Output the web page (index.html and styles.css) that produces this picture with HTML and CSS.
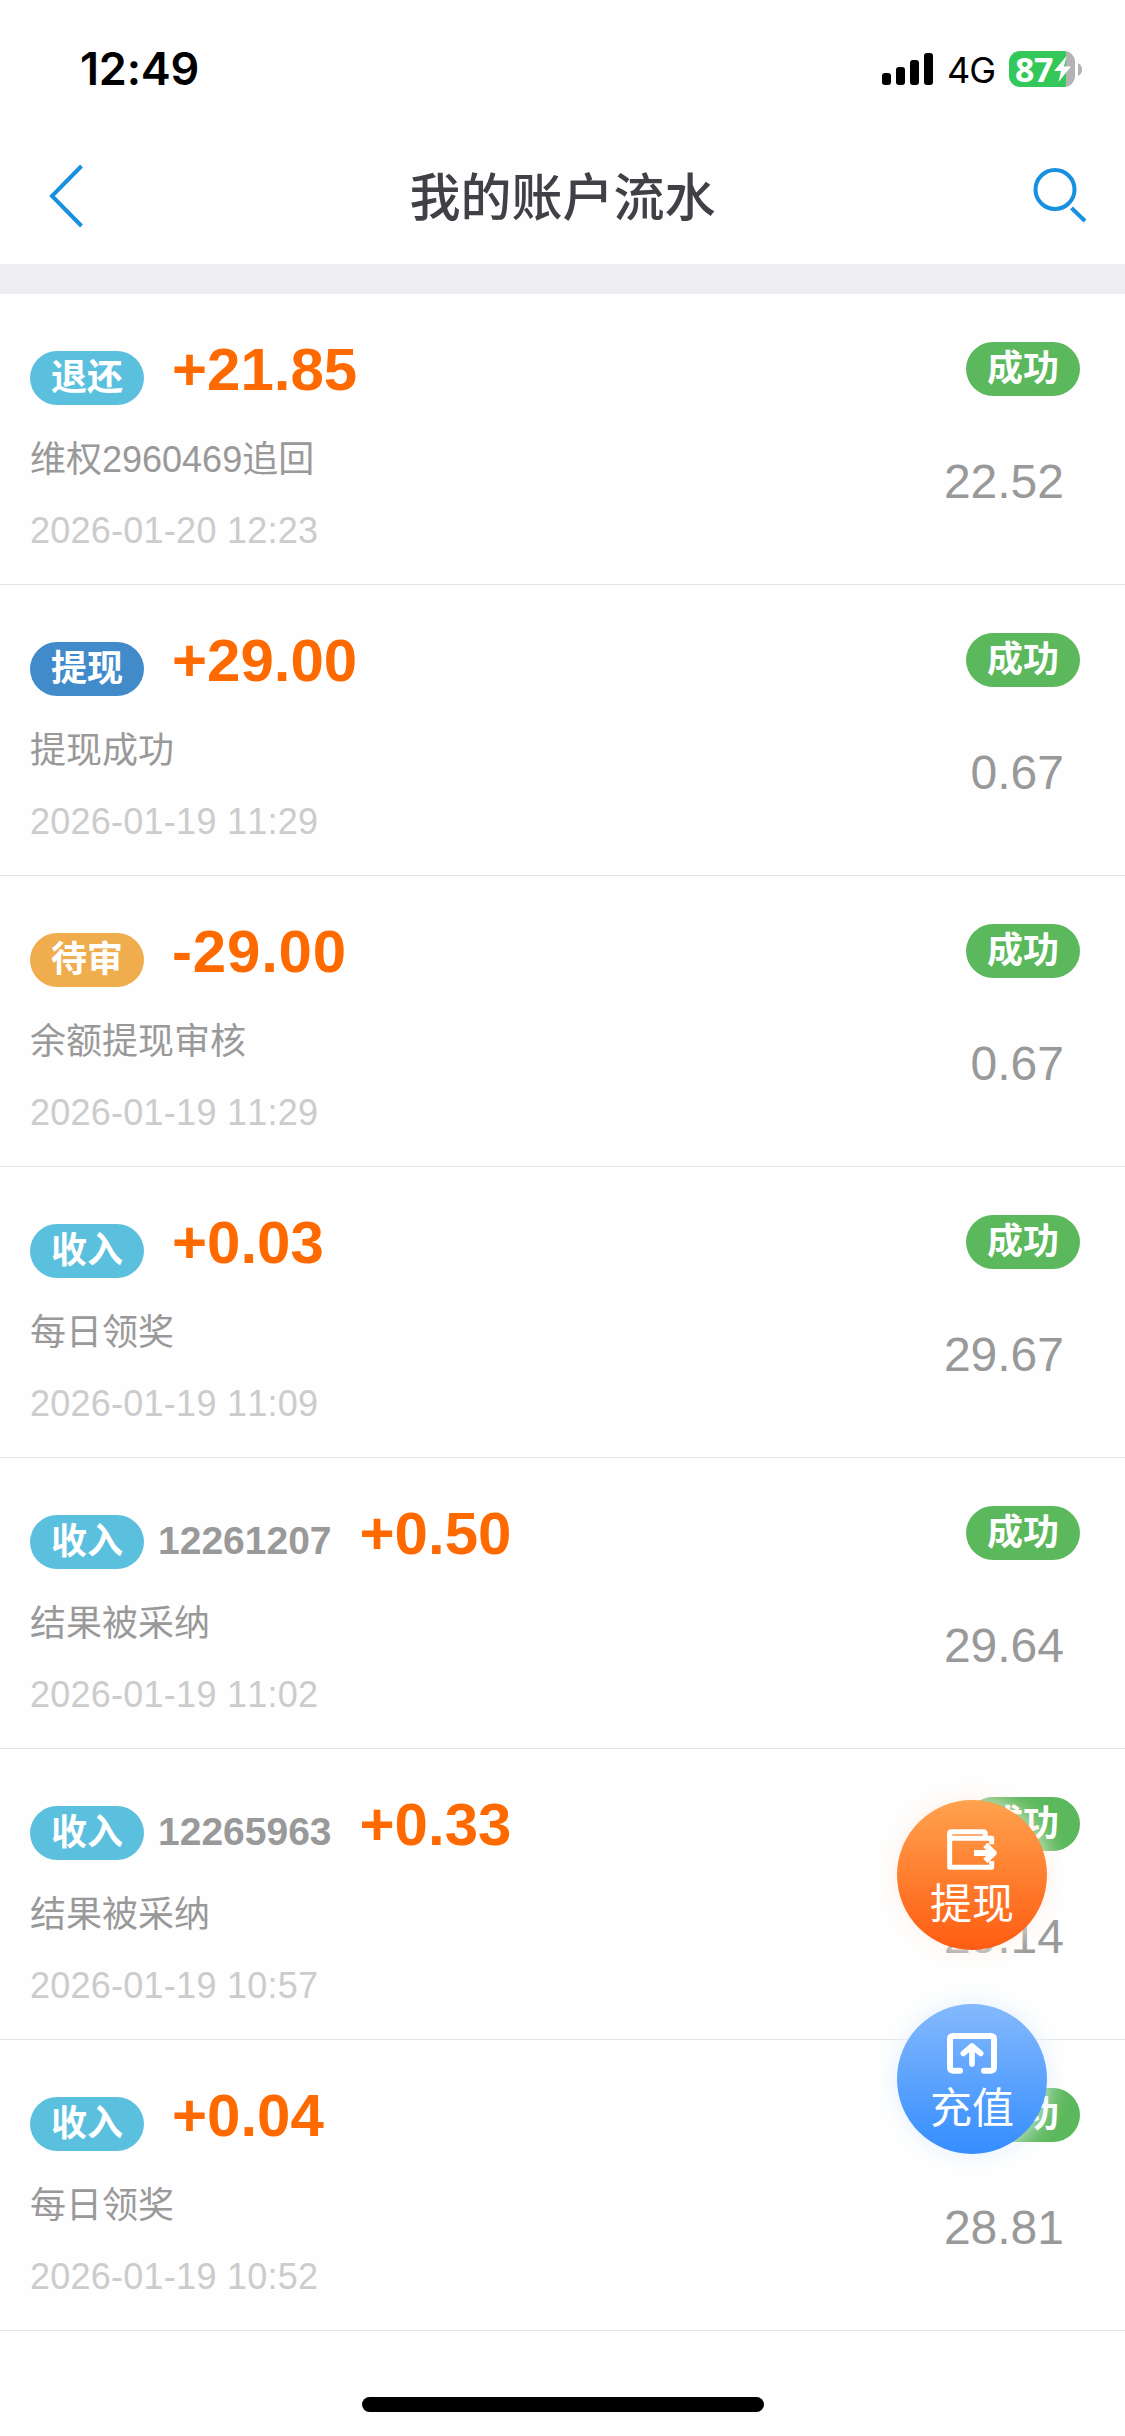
FILE: index.html
```html
<!DOCTYPE html>
<html lang="zh-CN">
<head>
<meta charset="utf-8">
<title>我的账户流水</title>
<link rel="stylesheet" href="styles.css">
</head>
<body>
<div class="screen">
  <div class="status-bar">
    <span class="clock">12:49</span>
    <div class="indicators">
      <svg class="signal" width="51" height="32" viewBox="0 0 51 32">
        <rect x="0" y="20" width="9" height="12" rx="3"/>
        <rect x="14" y="14" width="9" height="18" rx="3"/>
        <rect x="28" y="7" width="9" height="25" rx="3"/>
        <rect x="42" y="0" width="9" height="32" rx="3"/>
      </svg>
      <span class="network">4G</span>
      <div class="battery">
        <span class="level">87</span>
        <svg class="bolt" width="17" height="26" viewBox="0 0 17 26"><path d="M12.500 0L0 15H7L4.500 26L17 10.500H10Z" fill="#fff"/></svg>
      </div>
      <svg class="nub" width="4" height="13" viewBox="0 0 4 13"><path d="M0 0Q4 2 4 6.500T0 13Z" fill="#b3b3b3"/></svg>
    </div>
  </div>
  <header class="nav">
    <svg class="back" width="36" height="64" viewBox="0 0 36 64"><path d="M33.500 2L4 32L33.500 62"/></svg>
    <h1 class="title">我的账户流水</h1>
    <svg class="search" width="54" height="56" viewBox="0 0 54 56"><ellipse cx="22" cy="22.500" rx="19.500" ry="19.500"/><path d="M38.500 41L52 54"/></svg>
  </header>
  <main class="list">
    <article class="row">
      <div class="info">
        <div class="head"><span class="badge cyan">退还</span><div class="figures"><span class="amount">+21.85</span></div></div>
        <p class="desc">维权2960469追回</p>
        <time class="date">2026-01-20 12:23</time>
      </div>
      <div class="state"><span class="badge green">成功</span><span class="balance">22.52</span></div>
    </article>
    <article class="row">
      <div class="info">
        <div class="head"><span class="badge blue">提现</span><div class="figures"><span class="amount">+29.00</span></div></div>
        <p class="desc">提现成功</p>
        <time class="date">2026-01-19 11:29</time>
      </div>
      <div class="state"><span class="badge green">成功</span><span class="balance">0.67</span></div>
    </article>
    <article class="row">
      <div class="info">
        <div class="head"><span class="badge amber">待审</span><div class="figures"><span class="amount debit">-29.00</span></div></div>
        <p class="desc">余额提现审核</p>
        <time class="date">2026-01-19 11:29</time>
      </div>
      <div class="state"><span class="badge green">成功</span><span class="balance">0.67</span></div>
    </article>
    <article class="row">
      <div class="info">
        <div class="head"><span class="badge cyan">收入</span><div class="figures"><span class="amount">+0.03</span></div></div>
        <p class="desc">每日领奖</p>
        <time class="date">2026-01-19 11:09</time>
      </div>
      <div class="state"><span class="badge green">成功</span><span class="balance">29.67</span></div>
    </article>
    <article class="row">
      <div class="info">
        <div class="head"><span class="badge cyan">收入</span><div class="figures"><span class="order">12261207</span><span class="amount">+0.50</span></div></div>
        <p class="desc">结果被采纳</p>
        <time class="date">2026-01-19 11:02</time>
      </div>
      <div class="state"><span class="badge green">成功</span><span class="balance">29.64</span></div>
    </article>
    <article class="row">
      <div class="info">
        <div class="head"><span class="badge cyan">收入</span><div class="figures"><span class="order">12265963</span><span class="amount">+0.33</span></div></div>
        <p class="desc">结果被采纳</p>
        <time class="date">2026-01-19 10:57</time>
      </div>
      <div class="state"><span class="badge green">成功</span><span class="balance">29.14</span></div>
    </article>
    <article class="row">
      <div class="info">
        <div class="head"><span class="badge cyan">收入</span><div class="figures"><span class="amount">+0.04</span></div></div>
        <p class="desc">每日领奖</p>
        <time class="date">2026-01-19 10:52</time>
      </div>
      <div class="state"><span class="badge green">成功</span><span class="balance">28.81</span></div>
    </article>
  </main>
  <footer class="home"><div class="home-bar"></div></footer>
  <div class="floating">
    <div class="fab withdraw">
      <svg width="50" height="41" viewBox="0 0 150 123">
        <path d="M8 27V13Q8 8 13 8H108Q115 8 115 15V27" stroke-width="15"/>
        <path d="M8 13V115H134V96M8 28H134V46" stroke-width="15"/>
        <path d="M81 72H138M115 48L140 72L115 96" stroke-width="18"/>
      </svg>
      <span>提现</span>
    </div>
    <div class="fab recharge">
      <svg width="50" height="41" viewBox="0 0 150 123">
        <path d="M39 113H19Q9 113 9 103V19Q9 9 19 9H131Q141 9 141 19V103Q141 113 131 113H111" stroke-width="18" stroke-linecap="round"/>
        <path d="M75 93V40M49 61L75 39L101 61" stroke-width="17" stroke-linecap="round" stroke-linejoin="round"/>
      </svg>
      <span>充值</span>
    </div>
  </div>
</div>
</body>
</html>
```
FILE: styles.css
```css
* { box-sizing: border-box; }

body {
  margin: 0;
  background: #fefefe;
  font-family: "Liberation Sans", "Noto Sans CJK SC", sans-serif;
  font-kerning: none;
}

.screen {
  position: relative;
  width: 1125px;
  height: 2436px;
  display: flex;
  flex-direction: column;
  overflow: hidden;
}

.status-bar {
  height: 132px;
  padding: 39px 43px 0 80px;
  display: flex;
  justify-content: space-between;
  align-items: flex-start;
  color: #000;
  font-family: Inter, sans-serif;
}

.clock {
  font-size: 45px;
  font-weight: 600;
  line-height: 60px;
  letter-spacing: -0.2px;
}

.indicators { display: flex; align-items: center; height: 60px; }
.network { width: 48px; margin: 2px 0 0 14px; font-size: 36px; letter-spacing: -1px; }

.battery {
  width: 66px;
  height: 36px;
  margin-left: 14px;
  padding: 0 4px 0 6px;
  border-radius: 11px;
  display: flex;
  align-items: center;
  justify-content: space-between;
  background: linear-gradient(90deg, #34c759 57px, #b3b3b3 57px);
}

.level {
  width: 38px;
  color: #fff;
  font-family: "Noto Sans", sans-serif;
  font-size: 34px;
  font-weight: 700;
  line-height: 36px;
  letter-spacing: -0.5px;
}

.bolt { flex: none; }
.nub { margin-left: 3px; }

.nav {
  height: 132px;
  padding: 0 38px 0 48px;
  display: grid;
  grid-template-columns: 120px 1fr 130px;
  align-items: center;
}

.back, .search { fill: none; stroke: #1890e0; stroke-width: 4; }
.back { margin-bottom: 4px; }
.search { justify-self: end; margin-bottom: 7px; }

.title {
  margin: 0;
  padding-top: 2px;
  text-align: center;
  font-size: 51px;
  font-weight: 500;
  line-height: 130px;
  color: #3f4146;
}

.list { border-top: 30px solid #eeedf2; }

.row {
  height: 291px;
  padding: 48px 45px 0 30px;
  display: flex;
  justify-content: space-between;
  align-items: flex-start;
  border-bottom: 1px solid #e4e4e4;
}

.head { display: flex; height: 63px; align-items: flex-start; }
.head .badge { margin-top: 9px; }

.badge {
  padding: 0 21px;
  border-radius: 27px;
  color: #fff;
  font-size: 36px;
  font-weight: 700;
  line-height: 54px;
}

.cyan { background: #5bc0de; }
.blue { background: #428bca; }
.amber { background: #f0ad4e; }
.green { background: #5cb85c; }

.figures { display: flex; align-items: baseline; padding-top: 1px; line-height: 54px; font-weight: 700; }
.amount { margin-left: 28px; font-size: 60px; color: #ff6a00; }
.debit { letter-spacing: 0.8px; }
.order { margin-left: 14px; font-size: 39px; color: #999; }

.desc { margin: 28px 0 17px; font-size: 36px; line-height: 54px; color: #999; }
.date { display: block; font-size: 36px; line-height: 54px; letter-spacing: 0.25px; color: #ccc; }

.state { display: flex; flex-direction: column; align-items: flex-end; }
.balance { margin: 56px 16px 0 0; font-size: 48px; line-height: 60px; color: #999; }

.home { flex: 1; display: flex; justify-content: center; align-items: flex-end; padding-bottom: 24px; }
.home-bar { width: 402px; height: 15px; border-radius: 8px; background: #000; }

/* Action buttons hovering over the list */
.floating {
  position: absolute;
  top: 1800px;
  right: 78px;
  display: flex;
  flex-direction: column;
  gap: 54px;
}

.fab {
  width: 150px;
  height: 150px;
  padding-top: 29px;
  border-radius: 50%;
  display: flex;
  flex-direction: column;
  align-items: center;
  color: #fff;
  font-size: 42px;
  line-height: 60px;
}

.fab svg { flex: none; fill: none; stroke: #fff; stroke-linejoin: round; }
.fab span { margin-top: 5px; }
.withdraw { background: linear-gradient(#ffa24e, #ff5c12); box-shadow: 0 0 24px #fff0e6; }
.recharge { background: linear-gradient(#84b9fc, #358dff); box-shadow: 0 0 24px #e2f0ff; }
```
